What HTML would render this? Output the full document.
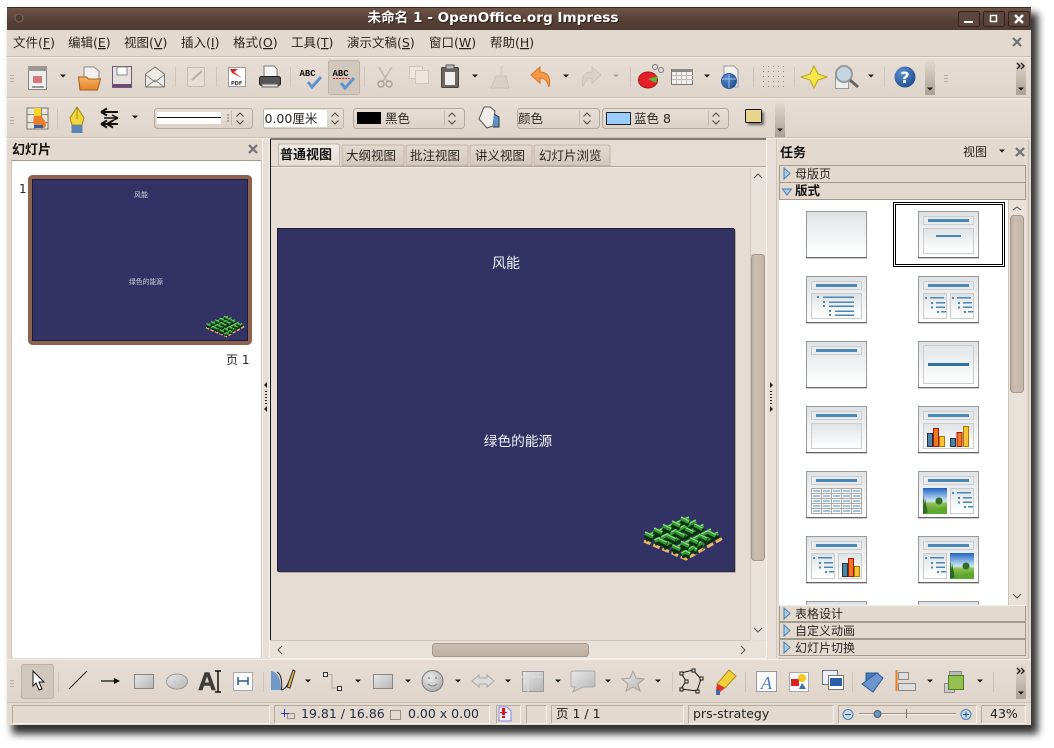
<!DOCTYPE html>
<html><head><meta charset="utf-8">
<style>
html,body{margin:0;padding:0;background:#fff;width:1054px;height:748px;overflow:hidden}
svg{display:block}
text{font-family:"DejaVu Sans","WenQuanYi Zen Hei","Noto Sans CJK SC",sans-serif;font-size:12.5px;fill:#2a2522}
.u{text-decoration:underline}
.z{font-family:"WenQuanYi Zen Hei","Noto Sans CJK SC",sans-serif}
</style></head><body>
<svg width="1054" height="748" viewBox="0 0 1054 748" xmlns="http://www.w3.org/2000/svg">
<defs>
<filter id="bl" x="-5%" y="-5%" width="110%" height="110%"><feGaussianBlur stdDeviation="4"/></filter>
<filter id="sb" x="-30%" y="-30%" width="160%" height="160%"><feGaussianBlur stdDeviation="1.2"/></filter>
<linearGradient id="tb" x1="0" y1="0" x2="0" y2="1"><stop offset="0" stop-color="#6f5347"/><stop offset=".6" stop-color="#553f35"/><stop offset="1" stop-color="#513c33"/></linearGradient>
<linearGradient id="tool" x1="0" y1="0" x2="0" y2="1"><stop offset="0" stop-color="#e6ddd5"/><stop offset="1" stop-color="#dfd5cb"/></linearGradient>
<linearGradient id="combo" x1="0" y1="0" x2="0" y2="1"><stop offset="0" stop-color="#e8e0d8"/><stop offset="1" stop-color="#dbd1c7"/></linearGradient>
<linearGradient id="over" x1="0" y1="0" x2="0" y2="1"><stop offset="0" stop-color="#e3d9cf"/><stop offset="1" stop-color="#aaa196"/></linearGradient>
<linearGradient id="thumbg" x1="0" y1="0" x2="0" y2="1"><stop offset="0" stop-color="#dfe2e4"/><stop offset=".8" stop-color="#fafbfb"/><stop offset="1" stop-color="#fff"/></linearGradient>
<linearGradient id="grey" x1="0" y1="0" x2="1" y2="1"><stop offset="0" stop-color="#e8e8e8"/><stop offset="1" stop-color="#b5b5b5"/></linearGradient>
<linearGradient id="sky" x1="0" y1="0" x2="0" y2="1"><stop offset="0" stop-color="#1e63c8"/><stop offset=".5" stop-color="#cfe6f2"/><stop offset=".6" stop-color="#8dc04a"/><stop offset="1" stop-color="#4b9a2c"/></linearGradient>
<linearGradient id="tabon" x1="0" y1="0" x2="0" y2="1"><stop offset="0" stop-color="#f1ece6"/><stop offset="1" stop-color="#e6ddd4"/></linearGradient>
<linearGradient id="taboff" x1="0" y1="0" x2="0" y2="1"><stop offset="0" stop-color="#e3dad0"/><stop offset="1" stop-color="#d2c7bb"/></linearGradient>
<linearGradient id="sth" x1="0" y1="0" x2="1" y2="0"><stop offset="0" stop-color="#b9aa9c"/><stop offset=".3" stop-color="#cdbfb2"/><stop offset="1" stop-color="#c3b4a6"/></linearGradient>
<linearGradient id="sthh" x1="0" y1="0" x2="0" y2="1"><stop offset="0" stop-color="#cbbdb0"/><stop offset="1" stop-color="#bfb0a2"/></linearGradient>
<linearGradient id="fold" x1="0" y1="0" x2="0" y2="1"><stop offset="0" stop-color="#f7b46a"/><stop offset="1" stop-color="#e67f25"/></linearGradient>
<radialGradient id="ball" cx=".35" cy=".3" r=".8"><stop offset="0" stop-color="#5b8fd0"/><stop offset="1" stop-color="#1d4a8a"/></radialGradient>
<radialGradient id="smile" cx=".4" cy=".35" r=".7"><stop offset="0" stop-color="#eee"/><stop offset="1" stop-color="#aaa"/></radialGradient>

<g id="frame"><rect x="0.5" y="0.5" width="60" height="46" fill="url(#thumbg)" stroke="#999"/><path d="M0 46.500H61" stroke="#666"/><path d="M0 47.500H61" stroke="#ccc"/></g>
<g id="ttl"><rect x="5.500" y="5.500" width="50" height="8" fill="#e8eaeb" stroke="#ccc"/><rect x="10" y="8" width="41" height="3" fill="#4a87b5"/></g>
<g id="body"><rect x="5.500" y="17.500" width="50" height="25" fill="url(#thumbg)" stroke="#ccc"/></g>
<g id="bul" fill="#4a87b5"><rect x="0" y="0" width="2" height="2"/><rect x="5" y="0" width="14" height="1.500"/><rect x="6" y="5" width="2" height="2"/><rect x="11" y="5" width="9" height="1.500"/><rect x="6" y="9.500" width="2" height="2"/><rect x="11" y="9.500" width="9" height="1.500"/><rect x="12" y="14" width="2" height="2"/><rect x="16" y="14" width="5" height="1.500"/></g>
<g id="bars3"><rect x="0.500" y="5.500" width="5" height="13" fill="#4f86a8" stroke="#234"/><rect x="6.500" y="0.500" width="5" height="18" fill="#ee7a20" stroke="#a11"/><rect x="12.500" y="8.500" width="5" height="10" fill="#f7c531" stroke="#a70"/></g>
<g id="pic"><rect width="24" height="26" fill="url(#sky)"/><path d="M0 6l3 20H0z M2 10l3 16H1z" fill="#2d6b26"/><circle cx="16" cy="13" r="3.500" fill="#2f6b2a"/><path d="M0 26l24-8v8z" fill="#5da92f"/></g>

<g id="maze" fill="none">
<path d="M644 541L686 559L723 538" stroke="#e9b765" stroke-width="3" stroke-dasharray="7 3"/>
<g id="mb">
<path d="M645.500 539L689 520M654.500 543L696 523M663.500 547.500L703.500 527.500M672.500 552L711 532M681.500 556L718 535" stroke="#0d2f10" stroke-width="6"/>
<path d="M645.500 537L689 518M654.500 541L696 521M663.500 545.500L703.500 525.500M672.500 550L711 530M681.500 554L718 533" stroke="#2f9a31" stroke-width="4"/>
<path d="M645.500 536L689 517M654.500 540L696 520M663.500 544.500L703.500 524.500M672.500 549L711 529M681.500 553L718 532" stroke="#a8dba0" stroke-width="1"/>
</g>
<g stroke-dasharray="9 6">
<path d="M645 535L690 556M654 531L697 552M663 527.500L704 547.500M672 524L711 543M681 520L718 539" stroke="#0d2f10" stroke-width="6"/>
<path d="M645 533L690 554M654 529L697 550M663 525.500L704 545.500M672 522L711 541M681 518L718 537" stroke="#2f9a31" stroke-width="4"/>
<path d="M645 532L690 553M654 528L697 549M663 524.500L704 544.500M672 521L711 540M681 517L718 536" stroke="#a8dba0" stroke-width="1"/>
</g>
</g>
<path id="dd" d="M-3-1.500H3L0 1.500z" fill="#1a1a1a"/>
<path id="ddg" d="M-3-1.500H3L0 1.500z" fill="#a9a39b"/>
<g id="grip" fill="#b6aca1"><rect x="0" y="0" width="4" height="1"/><rect x="0" y="3" width="4" height="1"/><rect x="0" y="6" width="4" height="1"/></g>
<g id="spin" fill="none" stroke="#4a443e" stroke-width="1"><path d="M-3.500 -2L0 -5.500L3.500 -2"/><path d="M-3.500 2L0 5.500L3.500 2"/></g>
<g id="cx"><path d="M-4-4L4 4M4-4L-4 4" stroke="#6d7278" stroke-width="2.200" fill="none"/></g>
<g id="tri"><path d="M0 0L6 5.500L0 11z" fill="#a9cbe8" stroke="#4a7eb0" transform="translate(-1 0)"/></g>
<path id="chev" d="M0 0l3 3-3 3M4 0l3 3-3 3" fill="none" stroke="#111" stroke-width="1.300"/>
</defs>

<!-- window shadow -->
<rect x="12" y="13" width="1026" height="721" fill="#000" opacity=".8" filter="url(#bl)"/>
<!-- window -->
<rect x="7" y="8" width="1024" height="717" fill="#e3d9cf"/>
<rect x="7" y="8" width="1024" height="22" fill="url(#tb)"/>
<path d="M7 7.500H1031" stroke="#3a2b25"/>
<circle cx="19" cy="18" r="4" fill="#4f3b32" stroke="#7c675c"/>
<text x="494" y="23" text-anchor="middle" style="font-weight:bold;font-size:13.600px;fill:#2d201a">未命名 1 - OpenOffice.org Impress</text>
<text x="493" y="22" text-anchor="middle" style="font-weight:bold;font-size:13.600px;fill:#fff">未命名 1 - OpenOffice.org Impress</text>
<g fill="#5c463b" stroke="#2f221c"><rect x="958.500" y="11.500" width="21" height="15" rx="2"/><rect x="983.500" y="11.500" width="21" height="15" rx="2"/><rect x="1008.500" y="11.500" width="21" height="15" rx="2"/></g>
<rect x="964" y="21" width="9" height="2" fill="#fff"/>
<rect x="990.500" y="15.500" width="6" height="6" fill="none" stroke="#fff" stroke-width="1.500"/>
<path d="M1015 15L1023 23M1023 15L1015 23" stroke="#fff" stroke-width="2.500"/>

<!-- menu -->
<g>
<text x="13" y="47">文件(<tspan class="u">F</tspan>)</text>
<text x="68" y="47">编辑(<tspan class="u">E</tspan>)</text>
<text x="124" y="47">视图(<tspan class="u">V</tspan>)</text>
<text x="181" y="47">插入(<tspan class="u">I</tspan>)</text>
<text x="233" y="47">格式(<tspan class="u">O</tspan>)</text>
<text x="291" y="47">工具(<tspan class="u">T</tspan>)</text>
<text x="347" y="47">演示文稿(<tspan class="u">S</tspan>)</text>
<text x="429" y="47">窗口(<tspan class="u">W</tspan>)</text>
<text x="490" y="47">帮助(<tspan class="u">H</tspan>)</text>
</g>
<use href="#cx" x="1017" y="42"/>
<path d="M7 56.500H1031" stroke="#c9bfb3"/><path d="M7 57.500H1031" stroke="#f0eae3"/>

<!-- toolbar 1 -->
<rect x="7" y="58" width="1024" height="39" fill="url(#tool)"/>
<path d="M7 97.500H1031" stroke="#c9bfb3"/><path d="M7 98.500H1031" stroke="#f0eae3"/>
<use href="#grip" x="10" y="75"/>
<rect x="28.500" y="66.500" width="18" height="23" fill="#eee" stroke="#8a8580"/><rect x="33" y="76" width="9" height="7" fill="#c44" opacity=".7"/><rect x="28" y="66" width="19" height="5" fill="#9b9893"/><rect x="32" y="86" width="12" height="2" fill="#999"/>
<use href="#dd" x="63" y="76"/>
<path d="M84 67h10l5 4v9H84z" fill="#f3f1ed" stroke="#888"/><path d="M78.500 77h8l2 2h12l-3 11H80z" fill="url(#fold)" stroke="#a75d1c"/>
<rect x="112.500" y="66.500" width="19" height="21" fill="#e5e1dc" stroke="#6d5a78"/><rect x="117" y="67" width="10" height="8" fill="#fff" stroke="#888"/><rect x="113" y="84" width="18" height="3" fill="#6d4a70"/>
<path d="M145.500 74L155 67L164.500 74V87H145.500z" fill="#eeeae5" stroke="#777"/><path d="M146 75L155 82L164 75M146 87L155 80L164 87" fill="none" stroke="#888"/>
<rect x="175" y="67" width="1" height="20" fill="#cfc6bb"/>
<rect x="187.500" y="67.500" width="17" height="19" fill="#e6dfd7" stroke="#c5bdb3"/><path d="M192 80L202 71" stroke="#b9b1a7" stroke-width="2"/>
<rect x="216" y="67" width="1" height="20" fill="#cfc6bb"/>
<rect x="228.500" y="67.500" width="17" height="19" fill="#fff" stroke="#999"/><path d="M230 69h8l-4 3 8 6-10-5z" fill="#d22"/><text x="231" y="85" style="font-size:5px;font-weight:bold;fill:#333">PDF</text>
<path d="M264 66h10l3 3v8h-13z" fill="#f5f5f5" stroke="#777"/><rect x="259.500" y="76.500" width="21" height="9" rx="2" fill="#555" stroke="#222"/><rect x="262" y="84" width="16" height="3" fill="#ddd" stroke="#666"/>
<rect x="290" y="67" width="1" height="20" fill="#cfc6bb"/>
<text x="299.500" y="76" style="font-size:9px;font-weight:bold;fill:#111;font-family:'Liberation Mono',monospace">ABC</text>
<path d="M308 82l4 5 9-10" fill="none" stroke="#5e95d0" stroke-width="3"/>
<rect x="328.500" y="60.500" width="31" height="34" rx="2" fill="#d2c7bc" stroke="#bfb3a6"/>
<text x="332.500" y="76" style="font-size:9px;font-weight:bold;fill:#111;font-family:'Liberation Mono',monospace">ABC</text>
<path d="M333 78.500h17" stroke="#c22" stroke-dasharray="2 1"/>
<path d="M341 83l4 5 9-10" fill="none" stroke="#5e95d0" stroke-width="3"/>
<rect x="364" y="67" width="1" height="20" fill="#cfc6bb"/>
<path d="M379 67L387 81M392 67L383 81" stroke="#c0b8ae" stroke-width="1.500"/><circle cx="381" cy="84" r="3" fill="none" stroke="#aaa39a" stroke-width="1.500"/><circle cx="389" cy="84" r="3" fill="none" stroke="#aaa39a" stroke-width="1.500"/>
<rect x="409.500" y="66.500" width="13" height="12" fill="#ece6df" stroke="#cdc5bb"/><rect x="415.500" y="70.500" width="13" height="13" fill="#ece6df" stroke="#cdc5bb"/>
<rect x="441.500" y="67.500" width="17" height="20" rx="1" fill="#6b665f" stroke="#444"/><rect x="445" y="72" width="10" height="13" fill="#f3f0ec"/><rect x="446" y="65" width="8" height="4" fill="#bbb" stroke="#555"/>
<use href="#dd" x="475" y="76"/>
<path d="M500 66h3v9h-3z" fill="#d9d0c6"/><path d="M496 76h10l3 12h-18z" fill="#d8d0c6" stroke="#ccc3b8"/>
<path d="M531 75L540 67V72C548 72 551 77 549 87C547 80 544 78 540 78V83z" fill="#f59a43" stroke="#d8742a"/>
<use href="#dd" x="566" y="76"/>
<path d="M601 75L592 67V72C584 72 581 77 583 87C585 80 588 78 592 78V83z" fill="#d9d2c9" stroke="#cdc5bb"/>
<use href="#ddg" x="616" y="76"/>
<rect x="630" y="67" width="1" height="20" fill="#cfc6bb"/>
<ellipse cx="648" cy="80" rx="9.500" ry="8" fill="#e6202a" stroke="#a01219"/><path d="M648 79L658 76L656 83z" fill="#5cb82e"/><circle cx="655" cy="67" r="2.500" fill="#ddd" stroke="#777"/><circle cx="661" cy="70" r="2.500" fill="#ddd" stroke="#777"/>
<rect x="671.500" y="69.500" width="21" height="15" fill="#f3f0ec" stroke="#777"/><rect x="672" y="69" width="21" height="3" fill="#888"/><path d="M672 75.500h21M672 79.500h21M676.500 72v12M681.500 72v12M686.500 72v12" stroke="#bbb"/>
<use href="#dd" x="707" y="76"/>
<path d="M724 66h10l4 4v17h-14z" fill="#f3f1ed" stroke="#999"/><circle cx="729" cy="81" r="7.500" fill="url(#ball)" stroke="#2c5a9c"/><path d="M722 79h14M729 74v14" stroke="#9dc0e8"/>
<rect x="753" y="67" width="1" height="20" fill="#cfc6bb"/>
<g fill="#8d857b"><rect x="763" y="66" width="1" height="1"/><rect x="768" y="66" width="1" height="1"/><rect x="773" y="66" width="1" height="1"/><rect x="778" y="66" width="1" height="1"/><rect x="783" y="66" width="1" height="1"/><rect x="763" y="71" width="1" height="1"/><rect x="768" y="71" width="1" height="1"/><rect x="773" y="71" width="1" height="1"/><rect x="778" y="71" width="1" height="1"/><rect x="783" y="71" width="1" height="1"/><rect x="763" y="76" width="1" height="1"/><rect x="768" y="76" width="1" height="1"/><rect x="773" y="76" width="1" height="1"/><rect x="778" y="76" width="1" height="1"/><rect x="783" y="76" width="1" height="1"/><rect x="763" y="81" width="1" height="1"/><rect x="768" y="81" width="1" height="1"/><rect x="773" y="81" width="1" height="1"/><rect x="778" y="81" width="1" height="1"/><rect x="783" y="81" width="1" height="1"/><rect x="763" y="86" width="1" height="1"/><rect x="768" y="86" width="1" height="1"/><rect x="773" y="86" width="1" height="1"/><rect x="778" y="86" width="1" height="1"/><rect x="783" y="86" width="1" height="1"/></g>
<rect x="794" y="67" width="1" height="20" fill="#cfc6bb"/>
<path d="M814 66L818 74L827 77L818 80L814 88L810 80L801 77L810 74z" fill="#f7e84a" stroke="#b8a21f"/>
<rect x="835.500" y="72.500" width="13" height="16" fill="#eee" stroke="#999"/><circle cx="844" cy="74" r="8" fill="#c6d5e2" stroke="#9a9a9a" stroke-width="2"/><path d="M850 80L858 87" stroke="#666" stroke-width="3"/>
<use href="#dd" x="871" y="76"/>
<rect x="884" y="67" width="1" height="20" fill="#cfc6bb"/>
<circle cx="905" cy="77" r="10.500" fill="url(#ball)"/><text x="905" y="83" text-anchor="middle" style="font-size:16px;font-weight:bold;fill:#fff">?</text>
<rect x="925" y="60" width="10" height="35" fill="url(#over)"/><use href="#dd" x="930" y="89"/>
<use href="#grip" x="944" y="75"/>
<rect x="1016" y="60" width="10" height="35" fill="url(#over)"/><use href="#dd" x="1021" y="89"/>
<use href="#chev" x="1017" y="63"/>

<!-- toolbar 2 -->
<rect x="7" y="99" width="1024" height="38" fill="url(#tool)"/>
<use href="#grip" x="10" y="117"/>
<rect x="27" y="108" width="21" height="21" fill="#e8e4de" stroke="#777"/><path d="M27.500 114.500h20M27.500 122.500h20M34.500 108v21M41.500 108v21" stroke="#888"/><rect x="34" y="108" width="7" height="12" fill="#f2d526"/><path d="M34 116h7l5 6v4l-2 2h-7l-4-5z" fill="#ed7d26"/><rect x="34" y="125" width="9" height="3" fill="#2d5fa8"/>
<rect x="57" y="109" width="1" height="20" fill="#cfc6bb"/>
<path d="M77 107L84 118L82 125H72L70 118z" fill="#f0d63a" stroke="#a28b1c"/><path d="M77 108V119" stroke="#a28b1c"/><rect x="71.500" y="125" width="11" height="8" fill="#5b86b5"/>
<path d="M101 112h17M101 112l6-3.500M101 112l6 3.500" stroke="#111" stroke-width="2" fill="none"/>
<path d="M104 118h14M118 118l-6-3M118 118l-6 3" stroke="#111" stroke-width="1.500" fill="none"/>
<path d="M101 124h17M101 124l6-3.500M101 124l6 3.500M107 124l6-3.500M107 124l6 3.500" stroke="#111" stroke-width="2" fill="none"/>
<use href="#dd" x="135" y="117"/>
<rect x="154.500" y="108.500" width="98" height="20" rx="3" fill="url(#combo)" stroke="#b4a99c"/>
<rect x="157" y="112" width="64" height="12" fill="#fff"/><path d="M157 117.500H221" stroke="#111"/>
<path d="M228 114v9" stroke="#777" stroke-dasharray="2 1"/><rect x="231" y="111" width="1" height="14" fill="#bbb"/><use href="#spin" x="240" y="118.500"/>
<rect x="263.500" y="108.500" width="80" height="20" rx="2" fill="url(#combo)" stroke="#c2b7ab"/><rect x="264" y="110" width="63" height="17" fill="#fff"/>
<text x="264.500" y="123" style="font-size:12.500px">0.00厘米</text>
<use href="#spin" x="335" y="118.500"/>
<rect x="353.500" y="108.500" width="111" height="20" rx="3" fill="url(#combo)" stroke="#b4a99c"/><rect x="357" y="112" width="24" height="12" fill="#000"/>
<text x="385" y="123">黑色</text><rect x="444" y="111" width="1" height="14" fill="#bbb"/><use href="#spin" x="452" y="118.500"/>
<path d="M484 107h6l5 4-2 15-6 2-8-9z" fill="#f1eeea" stroke="#555"/><path d="M494 114l5 3v10h-6" fill="#5b8fc8" stroke="#333"/>
<rect x="517.500" y="108.500" width="82" height="20" rx="3" fill="url(#combo)" stroke="#b4a99c"/><text x="518" y="123">颜色</text><rect x="579" y="111" width="1" height="14" fill="#bbb"/><use href="#spin" x="587" y="118.500"/>
<rect x="602.500" y="108.500" width="126" height="20" rx="3" fill="url(#combo)" stroke="#b4a99c"/><rect x="606.500" y="112.500" width="24" height="12" fill="#99ccff" stroke="#222"/>
<text x="634" y="123">蓝色 8</text><rect x="708" y="111" width="1" height="14" fill="#bbb"/><use href="#spin" x="716" y="118.500"/>
<rect x="748" y="112" width="16" height="13" fill="#000" opacity=".5" filter="url(#sb)"/>
<rect x="745.500" y="109.500" width="16" height="13" rx="1" fill="#e9d58b" stroke="#111"/>
<rect x="775" y="102" width="10" height="35" fill="url(#over)"/><use href="#dd" x="780" y="130"/>

<path d="M7 137.500H1031" stroke="#c9bfb3"/><path d="M7 138.500H1031" stroke="#f3eee8"/>

<!-- left panel -->
<rect x="9" y="139" width="253" height="520" fill="#e3d9cf"/>
<path d="M11.500 160.500H261" stroke="#a59a8e"/>
<rect x="12" y="161" width="249" height="497" fill="#fff"/>
<path d="M11.500 160V658M261.500 160V658" stroke="#cfc6bb"/>
<text class="z" x="12" y="154" style="font-weight:bold;font-size:13px;fill:#111">幻灯片</text>
<use href="#cx" x="253" y="149"/>
<text x="19" y="193" style="font-size:12px">1</text>
<rect x="29.500" y="176.500" width="221" height="167" rx="3" fill="#8d6350" stroke="#8d6350" stroke-width="3"/>
<rect x="32.500" y="179.500" width="215" height="161" fill="#333264" stroke="#1e1d42"/>
<text class="z" x="141" y="197" text-anchor="middle" style="font-size:7px;fill:#cfcfe0">风能</text>
<text class="z" x="146" y="284" text-anchor="middle" style="font-size:6.800px;fill:#cfcfe0">绿色的能源</text>
<use href="#maze" transform="translate(204 315) scale(.49) translate(-640 -515)"/>
<text x="226" y="364" style="font-size:12px">页 1</text>

<!-- splitters -->
<rect x="262" y="139" width="9" height="520" fill="#e8e0d8"/>
<path d="M262.500 139V658M269.500 139V658" stroke="#f6f2ee"/>
<g fill="#222"><path d="M267 382v6l-3-3z"/><path d="M267 412v-6l-3 3z"/><rect x="265" y="391" width="2" height="1"/><rect x="265" y="394" width="2" height="1"/><rect x="265" y="397" width="2" height="1"/><rect x="265" y="400" width="2" height="1"/><rect x="265" y="403" width="2" height="1"/></g>
<rect x="766" y="139" width="12" height="520" fill="#e8e0d8"/>
<path d="M766.500 139V658M776.500 139V658" stroke="#f6f2ee"/>
<g fill="#222"><path d="M770 382v6l3-3z"/><path d="M770 412v-6l3 3z"/><rect x="770" y="391" width="2" height="1"/><rect x="770" y="394" width="2" height="1"/><rect x="770" y="397" width="2" height="1"/><rect x="770" y="400" width="2" height="1"/><rect x="770" y="403" width="2" height="1"/></g>

<!-- center -->
<rect x="271" y="139" width="495" height="520" fill="#e5dcd3"/>
<path d="M270.500 139V640M270.500 139H766" stroke="#111"/>
<path d="M271 166.500H766" stroke="#b4a797"/>
<path d="M271 167.500H766" stroke="#efe9e2"/>
<path d="M278.500 166V146q0-2 2-2h57q2 0 2 2v20H278.500z" fill="url(#tabon)" stroke="#c2b4a4"/>
<g fill="url(#taboff)" stroke="#c2b4a4"><path d="M342 165.500V147q0-2 2-2h58q2 0 2 2v18.500z"/><path d="M406 165.500V147q0-2 2-2h58q2 0 2 2v18.500z"/><path d="M470 165.500V147q0-2 2-2h58q2 0 2 2v18.500z"/><path d="M534 165.500V147q0-2 2-2h72q2 0 2 2v18.500z"/></g>
<text class="z" x="280" y="159" style="font-weight:bold;font-size:13px;fill:#111">普通视图</text>
<text class="z" x="346" y="160">大纲视图</text>
<text class="z" x="410" y="160">批注视图</text>
<text class="z" x="475" y="160">讲义视图</text>
<text class="z" x="539" y="160">幻灯片浏览</text>
<!-- slide -->
<path d="M735 229.500V572H279" fill="none" stroke="#85796c" stroke-width="1"/>
<rect x="278" y="229" width="456" height="342" fill="#333264"/>
<path d="M277.500 571.500V228.500H734" fill="none" stroke="#1e1d33"/>
<path d="M278 571.500H735M734.500 229V572" fill="none" stroke="#2c2a3d"/>
<text class="z" x="506" y="268" text-anchor="middle" style="font-size:14px;fill:#f0f0f4">风能</text>
<text class="z" x="518" y="446" text-anchor="middle" style="font-size:13.700px;fill:#f0f0f4">绿色的能源</text>
<use href="#maze"/>
<!-- center scrollbars -->
<rect x="750" y="168" width="16" height="472" fill="#e9e2da"/>
<path d="M750.500 168V640" stroke="#cfc6bb"/>
<rect x="751.500" y="254.500" width="13" height="306" rx="3" fill="url(#sth)" stroke="#a89a8b"/>
<path d="M754 178l4-4 4 4" fill="none" stroke="#555"/><path d="M754 628l4 4 4-4" fill="none" stroke="#555"/>
<rect x="271" y="641" width="495" height="17" fill="#e9e2da"/>
<path d="M271 640.500H750" stroke="#cfc6bb"/><path d="M271 658.500H766" stroke="#f5f0ea"/>
<rect x="432.500" y="643.500" width="156" height="13" rx="3" fill="url(#sthh)" stroke="#a89a8b"/>
<path d="M282 646l-4 4 4 4" fill="none" stroke="#555"/><path d="M741 646l4 4-4 4" fill="none" stroke="#555"/>

<!-- right panel -->
<rect x="778" y="139" width="251" height="520" fill="#e3d9cf"/>
<path d="M776.500 139V658" stroke="#cfc6bb"/>
<text class="z" x="780" y="157" style="font-weight:bold;font-size:13px;fill:#111">任务</text>
<text class="z" x="963" y="156" style="font-size:12px">视图</text>
<use href="#dd" x="1002" y="151"/>
<use href="#cx" x="1020" y="152"/>
<rect x="779" y="200" width="247" height="406" fill="#fff"/>
<rect x="893.500" y="202.500" width="111" height="64" fill="#fff" stroke="#000"/>
<rect x="895.500" y="204.500" width="107" height="60" fill="none" stroke="#000"/>
<!-- thumbs -->
<g transform="translate(806 211)"><use href="#frame"/></g>
<g transform="translate(918 211)"><use href="#frame"/><use href="#ttl"/><use href="#body"/><rect x="18" y="24" width="25" height="2" fill="#4a87b5"/></g>
<g transform="translate(806 276)"><use href="#frame"/><use href="#ttl"/><use href="#body"/><g fill="#4a87b5"><rect x="11" y="20" width="2" height="2"/><rect x="17" y="20.500" width="31" height="1.500"/><rect x="17" y="25" width="2" height="2"/><rect x="23" y="25.500" width="25" height="1.500"/><rect x="17" y="29" width="2" height="2"/><rect x="23" y="29.500" width="25" height="1.500"/><rect x="23" y="34" width="2" height="2"/><rect x="29" y="34.500" width="19" height="1.500"/><rect x="23" y="38" width="2" height="2"/><rect x="29" y="38.500" width="19" height="1.500"/></g></g>
<g transform="translate(918 276)"><use href="#frame"/><use href="#ttl"/><rect x="5.500" y="17.500" width="23" height="25" fill="url(#thumbg)" stroke="#ccc"/><rect x="32.500" y="17.500" width="23" height="25" fill="url(#thumbg)" stroke="#ccc"/><use href="#bul" x="7" y="21"/><use href="#bul" x="34" y="21"/></g>
<g transform="translate(806 341)"><use href="#frame"/><use href="#ttl"/></g>
<g transform="translate(918 341)"><use href="#frame"/><rect x="5.500" y="4.500" width="50" height="38" fill="none" stroke="#ccc"/><rect x="10" y="22" width="41" height="3" fill="#2f71a5"/></g>
<g transform="translate(806 406)"><use href="#frame"/><use href="#ttl"/><use href="#body"/></g>
<g transform="translate(918 406)"><use href="#frame"/><use href="#ttl"/><use href="#body"/><use href="#bars3" x="9" y="22"/><g transform="translate(32 20)"><rect x="0.500" y="12.500" width="5" height="8" fill="#4f86a8" stroke="#234"/><rect x="7" y="6.500" width="5" height="14" fill="#ee7a20" stroke="#a11"/><rect x="13.500" y="0.500" width="5" height="20" fill="#f7c531" stroke="#a70"/></g></g>
<g transform="translate(806 471)"><use href="#frame"/><use href="#ttl"/><rect x="5.500" y="17.500" width="50" height="25" fill="#fff" stroke="#aaa"/><path d="M5.500 22.500h50M5.500 27.500h50M5.500 32.500h50M5.500 37.500h50M15.500 18v25M25.500 18v25M35.500 18v25M45.500 18v25" stroke="#aaa"/><path d="M7 20h7M17 20h7M27 20h7M37 20h7M47 20h7M7 25h7M17 25h7M27 25h7M37 25h7M47 25h7M7 30h7M17 30h7M27 30h7M37 30h7M47 30h7M7 35h7M17 35h7M27 35h7M37 35h7M47 35h7M7 40h7M17 40h7M27 40h7M37 40h7M47 40h7" stroke="#4a87b5"/></g>
<g transform="translate(918 471)"><use href="#frame"/><use href="#ttl"/><use href="#pic" x="5" y="17"/><rect x="32.500" y="17.500" width="23" height="25" fill="url(#thumbg)" stroke="#ccc"/><use href="#bul" x="34" y="21"/></g>
<g transform="translate(806 536)"><use href="#frame"/><use href="#ttl"/><rect x="5.500" y="17.500" width="23" height="25" fill="url(#thumbg)" stroke="#ccc"/><rect x="32.500" y="17.500" width="23" height="25" fill="url(#thumbg)" stroke="#ccc"/><use href="#bul" x="7" y="21"/><use href="#bars3" x="36" y="22"/></g>
<g transform="translate(918 536)"><use href="#frame"/><use href="#ttl"/><rect x="5.500" y="17.500" width="23" height="25" fill="url(#thumbg)" stroke="#ccc"/><use href="#bul" x="7" y="21"/><use href="#pic" x="32" y="17"/></g>
<g transform="translate(806 601)"><use href="#frame"/><use href="#ttl"/></g>
<g transform="translate(918 601)"><use href="#frame"/><use href="#ttl"/></g>
<!-- panel scrollbar -->
<rect x="1008" y="200" width="18" height="406" fill="#e9e2da"/>
<path d="M1008.500 200V606" stroke="#cfc6bb"/>
<rect x="1010.500" y="215.500" width="13" height="177" rx="3" fill="url(#sth)" stroke="#a89a8b"/>
<path d="M1013 210l4-3 4 3" fill="none" stroke="#555"/><path d="M1013 594l4 4 4-4" fill="none" stroke="#555"/>
<!-- headers -->
<rect x="779.500" y="165.500" width="246" height="17" fill="#e3d9cf" stroke="#a59a8e"/>
<rect x="779.500" y="182.500" width="246" height="17" fill="#e3d9cf" stroke="#a59a8e"/>
<use href="#tri" x="785" y="168"/>
<path d="M782.500 189L791.500 189L787 195z" fill="#a9cbe8" stroke="#4a7eb0"/>
<text class="z" x="795" y="178" style="font-size:12px">母版页</text>
<text class="z" x="795" y="195" style="font-weight:bold;font-size:12.500px;fill:#111">版式</text>
<rect x="779.500" y="605.500" width="246" height="16" fill="#e3d9cf" stroke="#a59a8e"/>
<rect x="779.500" y="622.500" width="246" height="16" fill="#e3d9cf" stroke="#a59a8e"/>
<rect x="779.500" y="639.500" width="246" height="16" fill="#e3d9cf" stroke="#a59a8e"/>
<path d="M779 605.500H1026" stroke="#f3eee8"/>
<use href="#tri" x="785" y="608"/><use href="#tri" x="785" y="625"/><use href="#tri" x="785" y="642"/>
<text class="z" x="795" y="618" style="font-size:12px">表格设计</text>
<text class="z" x="795" y="635" style="font-size:12px">自定义动画</text>
<text class="z" x="795" y="652" style="font-size:12px">幻灯片切换</text>
<path d="M1028.500 139V658M778 658.500H1029" stroke="#c9bfb3"/>

<!-- bottom toolbar -->
<rect x="7" y="659" width="1024" height="44" fill="url(#tool)"/>
<path d="M7 659.500H1031" stroke="#f3eee8"/><path d="M7 702.500H1031" stroke="#c9bfb3"/>
<use href="#grip" x="10" y="680"/>
<rect x="21.500" y="664.500" width="32" height="34" rx="2" fill="#d2c7bc" stroke="#bfb3a6"/>
<path d="M33 671L33 686L36 683L39 690L42 689L39 682L44 682z" fill="#fff" stroke="#111"/>
<rect x="58" y="672" width="1" height="20" fill="#cfc6bb"/>
<path d="M69 689L87 671" stroke="#222"/>
<path d="M101 681H118" stroke="#111" stroke-width="1.200"/><path d="M114 678L120 681L114 684z" fill="#111"/>
<rect x="134.500" y="674.500" width="19" height="14" fill="url(#grey)" stroke="#888"/>
<ellipse cx="177" cy="681.500" rx="10.500" ry="7.500" fill="url(#grey)" stroke="#999"/>
<text x="198" y="690" style="font-weight:bold;fill:#3c3c3c;font-family:'Liberation Sans',sans-serif;font-size:25px;stroke:#3c3c3c;stroke-width:.6">A</text>
<path d="M215 671h6M215 692h6M218 671v21" stroke="#111" stroke-width="1.500"/>
<rect x="233.500" y="672.500" width="19" height="18" fill="#fafafa" stroke="#aaa"/><path d="M238 681h10M238 677v8M248 677v8" stroke="#2a5a9c" stroke-width="1.500" fill="none"/>
<rect x="263" y="672" width="1" height="20" fill="#cfc6bb"/>
<path d="M271 671C279 672 281 682 281 690H271z" fill="#6f9ac8"/><path d="M277 672C283 675 282 690 281 690C285 690 288 685 291 676" fill="none" stroke="#222"/>
<path d="M287 687L293 670L295 671L290 688z" fill="#e8b84a" stroke="#333"/>
<use href="#dd" x="308" y="681"/>
<rect x="323.500" y="672.500" width="4" height="4" fill="#eee" stroke="#333"/><rect x="337.500" y="686.500" width="4" height="4" fill="#eee" stroke="#333"/>
<path d="M328 674.500H332V688H337" fill="none" stroke="#aaa" stroke-width="1"/>
<use href="#dd" x="358" y="681"/>
<rect x="373.500" y="674.500" width="19" height="14" fill="url(#grey)" stroke="#888"/>
<use href="#dd" x="408" y="681"/>
<circle cx="432.500" cy="681" r="10.500" fill="url(#smile)" stroke="#777"/><path d="M428 684q4.500 4 9 0" fill="none" stroke="#888"/><circle cx="429" cy="678" r="1" fill="#888"/><circle cx="436" cy="678" r="1" fill="#888"/>
<use href="#dd" x="458" y="681"/>
<path d="M472 681L479 675V678H487V675L494 681L487 687V684H479V687z" fill="#ddd" stroke="#aaa"/>
<use href="#dd" x="508" y="681"/>
<rect x="522.500" y="671.500" width="21" height="20" fill="url(#grey)" stroke="#999"/><path d="M522 677h21M528 672v20" stroke="#ddd"/>
<use href="#dd" x="558" y="681"/>
<path d="M573 671h20q2 0 2 2v12q0 2-2 2H583L573 692L575 687H573q-2 0-2-2V673q0-2 2-2z" fill="url(#grey)" stroke="#aaa"/>
<use href="#dd" x="608" y="681"/>
<path d="M633 671L636 678L644 679L638 684L640 691L633 687L626 691L628 684L622 679L630 678z" fill="url(#grey)" stroke="#a8a29a"/>
<use href="#dd" x="658" y="681"/>
<rect x="672" y="672" width="1" height="20" fill="#cfc6bb"/>
<path d="M681 673L693 670L701 679L697 691L681 689L686 681z" fill="none" stroke="#111"/>
<g fill="#fff" stroke="#111"><rect x="680" y="672" width="3" height="3"/><rect x="692" y="669" width="3" height="3"/><rect x="700" y="677" width="3" height="3"/><rect x="696" y="690" width="3" height="3"/><rect x="680" y="688" width="3" height="3"/><rect x="685" y="680" width="3" height="3"/></g>
<path d="M717 684L729 670L736 676L725 688z" fill="#f0d13a" stroke="#b58a1e"/><path d="M717 684L725 688L720 692L716 690z" fill="#e23030"/><rect x="716" y="690" width="4" height="5" fill="#3a6ea5"/>
<rect x="745" y="672" width="1" height="20" fill="#cfc6bb"/>
<rect x="756.500" y="671.500" width="20" height="20" fill="#fafafa" stroke="#999"/><text x="761" y="689" style="font-size:18px;font-style:italic;fill:#4f7fc0;font-family:'Liberation Serif',serif">A</text>
<rect x="789.500" y="672.500" width="19" height="19" fill="#fafafa" stroke="#aaa"/><rect x="791" y="679" width="8" height="7" fill="#d22"/><circle cx="802" cy="678" r="4" fill="#f3c81e"/><path d="M799 689l3-6 4 6z" fill="#3a6ea5"/>
<rect x="822.500" y="670.500" width="15" height="14" fill="#eef" stroke="#777"/><rect x="828.500" y="675.500" width="15" height="14" fill="#fff" stroke="#777"/><rect x="830" y="678" width="12" height="8" fill="#2d5fa8"/>
<rect x="852" y="672" width="1" height="20" fill="#cfc6bb"/>
<path d="M866 673h12v12h-12z" fill="#4a78b5" stroke="#2a5a9c"/><path d="M862 684L873 692L883 678L877 673z" fill="#6d96cc" stroke="#2a5a9c"/>
<path d="M896.500 670V691" stroke="#ee7d1b" stroke-width="2"/><rect x="898.500" y="672.500" width="10" height="7" fill="#ddd" stroke="#888"/><rect x="898.500" y="683.500" width="17" height="7" fill="#ddd" stroke="#888"/>
<use href="#dd" x="930" y="681"/>
<rect x="949.500" y="671.500" width="12" height="12" fill="#bbb" stroke="#888"/><rect x="944.500" y="683.500" width="10" height="9" fill="#ccc" stroke="#888"/><rect x="948.500" y="675.500" width="15" height="14" fill="#93c050" stroke="#4d7d1f"/>
<use href="#dd" x="980" y="681"/>
<rect x="993" y="672" width="1" height="20" fill="#cfc6bb"/>
<rect x="1016" y="664" width="10" height="35" fill="url(#over)"/><use href="#dd" x="1021" y="693"/>
<use href="#chev" x="1017" y="668"/>

<!-- status bar -->
<rect x="7" y="703" width="1024" height="22" fill="#e3d9cf"/>
<g fill="none" stroke="#b6ab9f"><path d="M12.500 723V705.500H269"/><path d="M274.500 723V705.500H489"/><path d="M496.500 723V705.500H520"/><path d="M526.500 723V705.500H546"/><path d="M551.500 723V705.500H683"/><path d="M688.500 723V705.500H833"/><path d="M838.500 723V705.500H976"/><path d="M981.500 723V705.500H1025"/></g>
<g fill="none" stroke="#f5f1ec"><path d="M13 723.500H269.500V706"/><path d="M275 723.500H489.500V706"/><path d="M497 723.500H520.500V706"/><path d="M527 723.500H546.500V706"/><path d="M552 723.500H683.500V706"/><path d="M689 723.500H833.500V706"/><path d="M839 723.500H976.500V706"/><path d="M982 723.500H1025.500V706"/></g>
<path d="M281 713.500h8M284.500 709v8" stroke="#2a3bc0"/><rect x="287.500" y="713.500" width="7" height="5" fill="none" stroke="#444" stroke-dasharray="1 1"/>
<text x="301" y="718" style="fill:#1f2d4a">19.81 / 16.86</text>
<rect x="390.500" y="710.500" width="10" height="9" fill="none" stroke="#444" stroke-dasharray="1 1"/>
<text x="408" y="718" style="fill:#1f2d4a">0.00 x 0.00</text>
<path d="M499 707h8l4 4v10h-12z" fill="#eef" stroke="#8a8ad8"/><rect x="502" y="708" width="3" height="7" fill="#d11"/><rect x="502" y="716" width="3" height="2" fill="#d11"/><rect x="500" y="712" width="7" height="1" fill="#d11"/>
<text x="556" y="718" style="fill:#222">页 1 / 1</text>
<text x="693" y="718" style="fill:#222">prs-strategy</text>
<circle cx="848" cy="714.500" r="5" fill="#c9dcec" stroke="#4a7eb0"/><path d="M845 714.500h6" stroke="#1f4f80"/>
<path d="M859 713.500H956" stroke="#9a9188"/><path d="M859 714.500H956" stroke="#f5f1ec"/><path d="M906.500 709v9" stroke="#777"/>
<circle cx="877.500" cy="714" r="3.500" fill="#6c93b5" stroke="#40617f"/>
<circle cx="966" cy="714.500" r="5" fill="#c9dcec" stroke="#4a7eb0"/><path d="M963 714.500h6M966 711.500v6" stroke="#1f4f80"/>
<text x="990" y="718" style="fill:#222">43%</text>
</svg>
</body></html>
